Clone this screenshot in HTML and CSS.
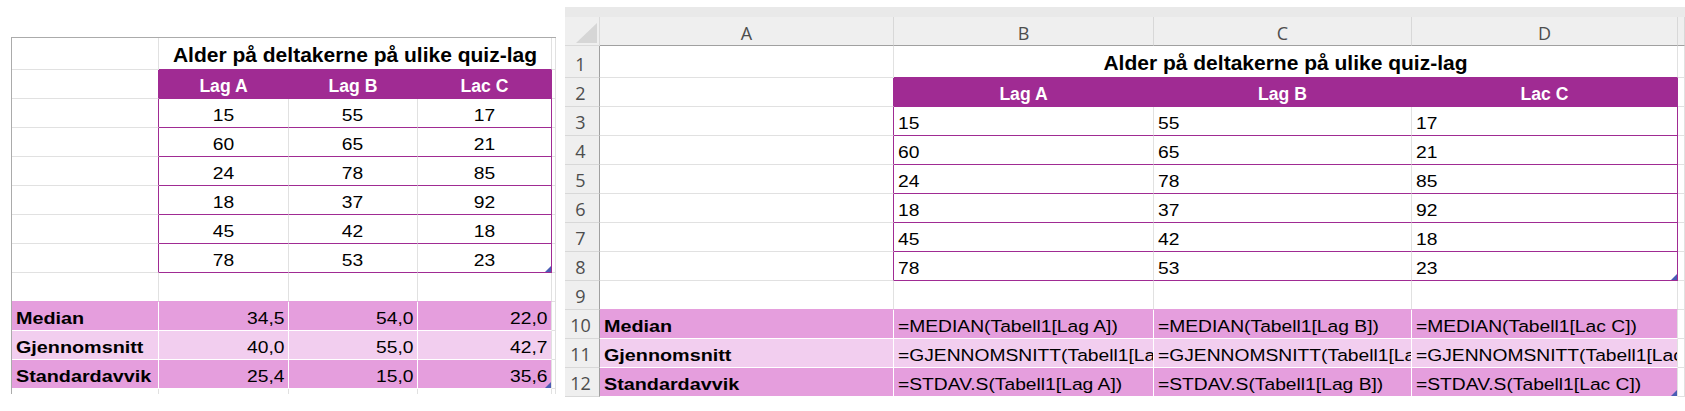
FILE: index.html
```html
<!DOCTYPE html>
<html lang="no">
<head>
<meta charset="utf-8">
<title>Alder på deltakerne</title>
<link rel="stylesheet" href="styles.css">
</head>
<body>
<div class="page">
  <div class="sheet-a">
    <!-- row 1 -->
    <div class="c"></div>
    <div class="c title"><span>Alder på deltakerne på ulike quiz-lag</span></div>
    <div class="c e"></div>
    <!-- row 2 -->
    <div class="c tl"></div>
    <div class="c hd">Lag A</div>
    <div class="c hd">Lag B</div>
    <div class="c hd">Lac C</div>
    <div class="c e"></div>
    <!-- rows 3-8 -->
    <div class="c tl"></div><div class="c td mid"><span class="n">15</span></div><div class="c td mid"><span class="n">55</span></div><div class="c td tr mid"><span class="n">17</span></div><div class="c e"></div>
    <div class="c tl"></div><div class="c td mid"><span class="n">60</span></div><div class="c td mid"><span class="n">65</span></div><div class="c td tr mid"><span class="n">21</span></div><div class="c e"></div>
    <div class="c tl"></div><div class="c td mid"><span class="n">24</span></div><div class="c td mid"><span class="n">78</span></div><div class="c td tr mid"><span class="n">85</span></div><div class="c e"></div>
    <div class="c tl"></div><div class="c td mid"><span class="n">18</span></div><div class="c td mid"><span class="n">37</span></div><div class="c td tr mid"><span class="n">92</span></div><div class="c e"></div>
    <div class="c tl"></div><div class="c td mid"><span class="n">45</span></div><div class="c td mid"><span class="n">42</span></div><div class="c td tr mid"><span class="n">18</span></div><div class="c e"></div>
    <div class="c tl"></div><div class="c td mid"><span class="n">78</span></div><div class="c td mid"><span class="n">53</span></div><div class="c td tr mid"><span class="n">23</span><i class="handle"></i></div><div class="c e"></div>
    <!-- row 9 -->
    <div class="c pb"></div><div class="c pb"></div><div class="c pb"></div><div class="c pb"></div><div class="c e"></div>
    <!-- rows 10-12 -->
    <div class="c st lab"><span class="n">Median</span></div><div class="c st right"><span class="n">34,5</span></div><div class="c st right"><span class="n">54,0</span></div><div class="c st sd right"><span class="n">22,0</span></div><div class="c e"></div>
    <div class="c st st2 lab"><span class="n">Gjennomsnitt</span></div><div class="c st st2 right"><span class="n">40,0</span></div><div class="c st st2 right"><span class="n">55,0</span></div><div class="c st st2 sd right"><span class="n">42,7</span></div><div class="c e"></div>
    <div class="c st lab"><span class="n">Standardavvik</span></div><div class="c st right"><span class="n">25,4</span></div><div class="c st right"><span class="n">15,0</span></div><div class="c st sd right"><span class="n">35,6</span><i class="handle"></i></div><div class="c e"></div>
    <!-- partial row 13 -->
    <div class="c nb"></div><div class="c nb"></div><div class="c nb"></div><div class="c nb"></div><div class="c e nb"></div>
  </div>

  <div class="sheet-b">
    <div class="band"></div>
    <div class="grid-b">
      <!-- column headers -->
      <div class="corner"></div>
      <div class="ch">A</div>
      <div class="ch">B</div>
      <div class="ch">C</div>
      <div class="ch">D</div>
      <div class="ch e"></div>
      <!-- row 1 -->
      <div class="rh r1">1</div>
      <div class="c"></div>
      <div class="c title"><span>Alder på deltakerne på ulike quiz-lag</span></div>
      <div class="c e"></div>
      <!-- row 2 -->
      <div class="rh">2</div>
      <div class="c tl"></div>
      <div class="c hd">Lag A</div>
      <div class="c hd">Lag B</div>
      <div class="c hd">Lac C</div>
      <div class="c e"></div>
      <!-- rows 3-8 -->
      <div class="rh">3</div><div class="c tl"></div><div class="c td"><span class="n">15</span></div><div class="c td"><span class="n">55</span></div><div class="c td tr"><span class="n">17</span></div><div class="c e"></div>
      <div class="rh">4</div><div class="c tl"></div><div class="c td"><span class="n">60</span></div><div class="c td"><span class="n">65</span></div><div class="c td tr"><span class="n">21</span></div><div class="c e"></div>
      <div class="rh">5</div><div class="c tl"></div><div class="c td"><span class="n">24</span></div><div class="c td"><span class="n">78</span></div><div class="c td tr"><span class="n">85</span></div><div class="c e"></div>
      <div class="rh">6</div><div class="c tl"></div><div class="c td"><span class="n">18</span></div><div class="c td"><span class="n">37</span></div><div class="c td tr"><span class="n">92</span></div><div class="c e"></div>
      <div class="rh">7</div><div class="c tl"></div><div class="c td"><span class="n">45</span></div><div class="c td"><span class="n">42</span></div><div class="c td tr"><span class="n">18</span></div><div class="c e"></div>
      <div class="rh">8</div><div class="c tl"></div><div class="c td"><span class="n">78</span></div><div class="c td"><span class="n">53</span></div><div class="c td tr"><span class="n">23</span><i class="handle"></i></div><div class="c e"></div>
      <!-- row 9 -->
      <div class="rh">9</div><div class="c pb"></div><div class="c pb"></div><div class="c pb"></div><div class="c pb"></div><div class="c e"></div>
      <!-- rows 10-12 -->
      <div class="rh">10</div><div class="c st lab"><span class="n">Median</span></div><div class="c st"><span class="n">=MEDIAN(Tabell1[Lag A])</span></div><div class="c st"><span class="n">=MEDIAN(Tabell1[Lag B])</span></div><div class="c st sd"><span class="n">=MEDIAN(Tabell1[Lac C])</span></div><div class="c e"></div>
      <div class="rh">11</div><div class="c st st2 lab"><span class="n">Gjennomsnitt</span></div><div class="c st st2"><span class="n">=GJENNOMSNITT(Tabell1[Lag A])</span></div><div class="c st st2"><span class="n">=GJENNOMSNITT(Tabell1[Lag B])</span></div><div class="c st st2 sd"><span class="n">=GJENNOMSNITT(Tabell1[Lac C])</span></div><div class="c e"></div>
      <div class="rh">12</div><div class="c st lab"><span class="n">Standardavvik</span></div><div class="c st"><span class="n">=STDAV.S(Tabell1[Lag A])</span></div><div class="c st"><span class="n">=STDAV.S(Tabell1[Lag B])</span></div><div class="c st sd"><span class="n">=STDAV.S(Tabell1[Lac C])</span><i class="handle"></i></div><div class="c e"></div>
    </div>
  </div>
</div>
</body>
</html>
```

FILE: styles.css
```css
* { box-sizing: border-box; }

html, body {
  margin: 0;
  padding: 0;
  background: #ffffff;
}

body {
  width: 1685px;
  height: 411px;
  overflow: hidden;
  font-family: "Liberation Sans", Arial, sans-serif;
  color: #000000;
}

.page {
  display: flex;
  align-items: flex-start;
}

/* ---------- left sheet (no headings) ---------- */
.sheet-a {
  margin: 37px 0 0 11px;
  border-top: 1px solid #ababab;
  border-left: 1px solid #ababab;
  display: grid;
  grid-template-columns: 147px 130px 129px 134px 4px;
  grid-template-rows: 32px repeat(11, 29px) 5px;
}

/* ---------- right sheet (with headings) ---------- */
.sheet-b {
  margin: 7px 0 0 9px;
  width: 1120px;
}

.band {
  height: 10px;
  background: #e9e9e9;
}

.grid-b {
  display: grid;
  grid-template-columns: 35px 294px 260px 258px 266px 7px;
  grid-template-rows: 29px 32px repeat(11, 29px);
}

/* ---------- cells ---------- */
.c {
  position: relative;
  display: flex;
  align-items: flex-end;
  padding: 0 4px 2px;
  border-right: 1px solid #e1e1e1;
  border-bottom: 1px solid #e1e1e1;
  overflow: hidden;
  white-space: nowrap;
  font-size: 17.2px;
  line-height: 20px;
}

.c.e { padding: 0; }
.c.nb { border-bottom: none; }

.n {
  display: inline-block;
  transform: scaleX(1.12);
  transform-origin: left bottom;
}
.mid { justify-content: center; }
.mid .n { transform-origin: center bottom; }
.right { justify-content: flex-end; }
.right .n { transform-origin: right bottom; }

.title {
  grid-column: span 3;
  justify-content: center;
  font-weight: 700;
  font-size: 21px;
  line-height: 24px;
  padding-bottom: 2px;
  border-bottom-color: #a02b93;
}

.hd {
  justify-content: center;
  background: #a02b93;
  border-color: #a02b93;
  color: #ffffff;
  font-weight: 700;
  font-size: 17.6px;
}

.tl { border-right-color: #a02b93; }
.td { border-bottom-color: #a02b93; }
.tr { border-right-color: #a02b93; }
.pb { border-bottom-color: #e59edd; }

.st {
  background: #e59edd;
  border-right-color: #ffffff;
  border-bottom-color: #ffffff;
}
.st2 { background: #f2ceef; }
.st.sd { border-right-color: #e1e1e1; }
.lab { font-weight: 700; }
.lab .n { transform: scaleX(1.15); }

.handle {
  position: absolute;
  right: 0;
  bottom: 0;
  width: 6px;
  height: 6px;
  background: #4a5cb4;
  clip-path: polygon(100% 0, 100% 100%, 0 100%);
}

/* ---------- headings ---------- */
.corner {
  position: relative;
  background: #efefef;
  border-right: 1px solid #dadada;
  border-bottom: 1px solid #dadada;
}
.corner::after {
  content: "";
  position: absolute;
  right: 2px;
  bottom: 2px;
  width: 21px;
  height: 20px;
  background: #d6d6d6;
  clip-path: polygon(100% 0, 100% 100%, 0 100%);
}

.ch, .rh {
  display: flex;
  align-items: flex-end;
  justify-content: center;
  background: #efefef;
  font-family: "Open Sans", "Noto Sans", sans-serif;
  font-size: 18px;
  line-height: 20px;
  color: #4d4d4d;
}

.ch {
  padding-bottom: 2px;
  border-right: 1px solid #d8d8d8;
  border-bottom: 1px solid #a0a0a0;
}

.rh {
  padding: 0 3px 3px 0;
  border-right: 1px solid #a0a0a0;
  border-bottom: 1px solid #d8d8d8;
}
```
